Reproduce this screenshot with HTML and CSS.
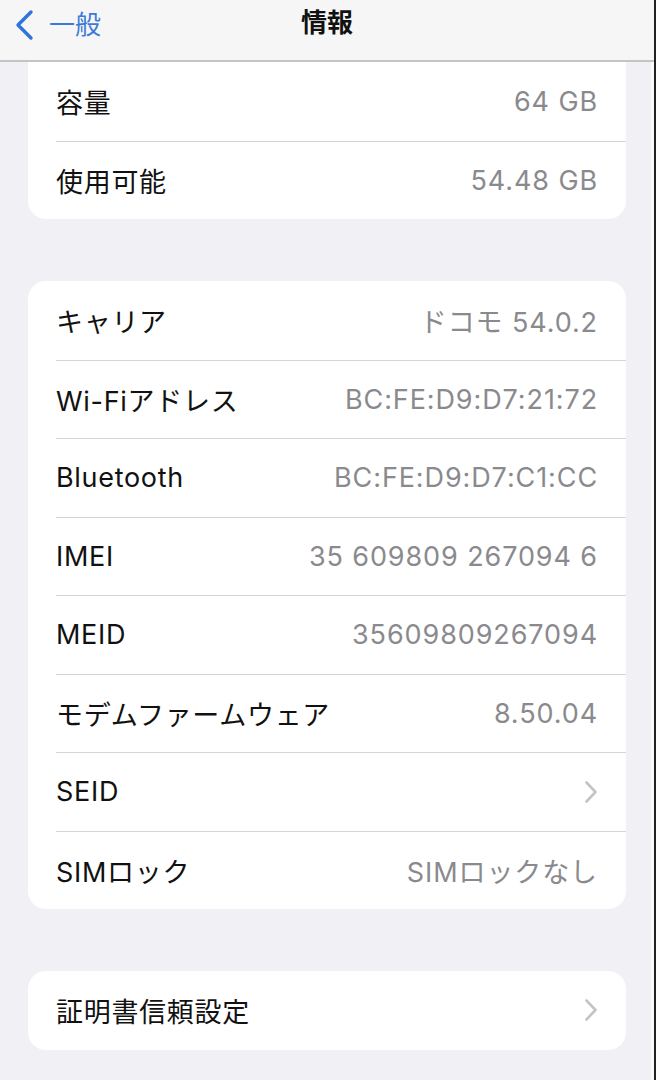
FILE: index.html
```html
<!DOCTYPE html>
<html lang="ja">
<head>
<meta charset="utf-8"/>
<meta content="width=device-width, initial-scale=1.0" name="viewport"/>
<title>情報</title>
<link rel="stylesheet" href="styles.css">
</head>
<body>
<div class="screen">
  <div class="navbar">
    <a class="back" href="#">
      <svg class="back-icon" width="22" height="32" viewBox="0 0 22 32"><path d="M17 3 L4 16 L17 29" fill="none" stroke="#2f74dc" stroke-width="3.4" stroke-linecap="round" stroke-linejoin="round"/></svg>
      <span>一般</span>
    </a>
    <div class="title">情報</div>
    <div></div>
  </div>

  <div class="group group-first">
    <div class="row"><div class="row-inner"><span class="label">容量</span><span class="value">64 GB</span></div></div>
    <div class="row"><div class="row-inner"><span class="label">使用可能</span><span class="value">54.48 GB</span></div></div>
  </div>

  <div class="group">
    <div class="row"><div class="row-inner"><span class="label">キャリア</span><span class="value">ドコモ 54.0.2</span></div></div>
    <div class="row"><div class="row-inner"><span class="label">Wi-Fiアドレス</span><span class="value">BC:FE:D9:D7:21:72</span></div></div>
    <div class="row"><div class="row-inner"><span class="label">Bluetooth</span><span class="value">BC:FE:D9:D7:C1:CC</span></div></div>
    <div class="row"><div class="row-inner"><span class="label">IMEI</span><span class="value">35 609809 267094 6</span></div></div>
    <div class="row"><div class="row-inner"><span class="label">MEID</span><span class="value">35609809267094</span></div></div>
    <div class="row"><div class="row-inner"><span class="label">モデムファームウェア</span><span class="value">8.50.04</span></div></div>
    <div class="row"><div class="row-inner"><span class="label">SEID</span><svg class="chevron" width="14" height="24" viewBox="0 0 14 24"><path d="M2.5 2.5 L11.5 12 L2.5 21.5" fill="none" stroke="#c4c4c8" stroke-width="2.6" stroke-linecap="round" stroke-linejoin="round"/></svg></div></div>
    <div class="row"><div class="row-inner"><span class="label">SIMロック</span><span class="value">SIMロックなし</span></div></div>
  </div>

  <div class="group">
    <div class="row"><div class="row-inner"><span class="label">証明書信頼設定</span><svg class="chevron" width="14" height="24" viewBox="0 0 14 24"><path d="M2.5 2.5 L11.5 12 L2.5 21.5" fill="none" stroke="#c4c4c8" stroke-width="2.6" stroke-linecap="round" stroke-linejoin="round"/></svg></div></div>
  </div>
</div>
</body>
</html>
```

FILE: styles.css
```css
body {
  margin: 0;
  background: #f0f0f5;
  font-family: 'Inter', 'Noto Sans CJK JP', sans-serif;
  color: #111;
}
.screen {
  min-height: 1080px;
  background: #f0f0f5;
  border-right: 2px solid #222;
  box-shadow: inset -3px 0 0 #fafafa;
  overflow: hidden;
}
.navbar {
  height: 60px;
  box-sizing: content-box;
  background: #f6f6f7;
  border-bottom: 2px solid #c4c4c6;
  display: grid;
  grid-template-columns: 1fr auto 1fr;
  align-items: start;
}
.back {
  display: flex;
  align-items: center;
  gap: 13px;
  padding: 4px 0 0 14px;
  text-decoration: none;
  color: #3b7bd6;
  font-size: 26px;
}
.back-icon {
  margin-top: 4px;
}
.title {
  padding-top: 2px;
  font-size: 26px;
  font-weight: 700;
  color: #111;
}
.group {
  background: #fff;
  margin: 62px 28px 0 28px;
  border-radius: 18px;
  overflow: hidden;
}
.group-first {
  margin-top: 0;
  border-top-left-radius: 0;
  border-top-right-radius: 0;
}
.row {
  padding-left: 28px;
  height: 78.5px;
}
.row-inner {
  height: 100%;
  box-sizing: border-box;
  padding-right: 28px;
  display: flex;
  align-items: center;
  justify-content: space-between;
}
.row + .row .row-inner {
  border-top: 1px solid #d4d4d8;
}
.label {
  font-size: 27px;
  letter-spacing: 0.7px;
}
.value {
  font-size: 27px;
  color: #8a8a8e;
  letter-spacing: 0.9px;
}
```
